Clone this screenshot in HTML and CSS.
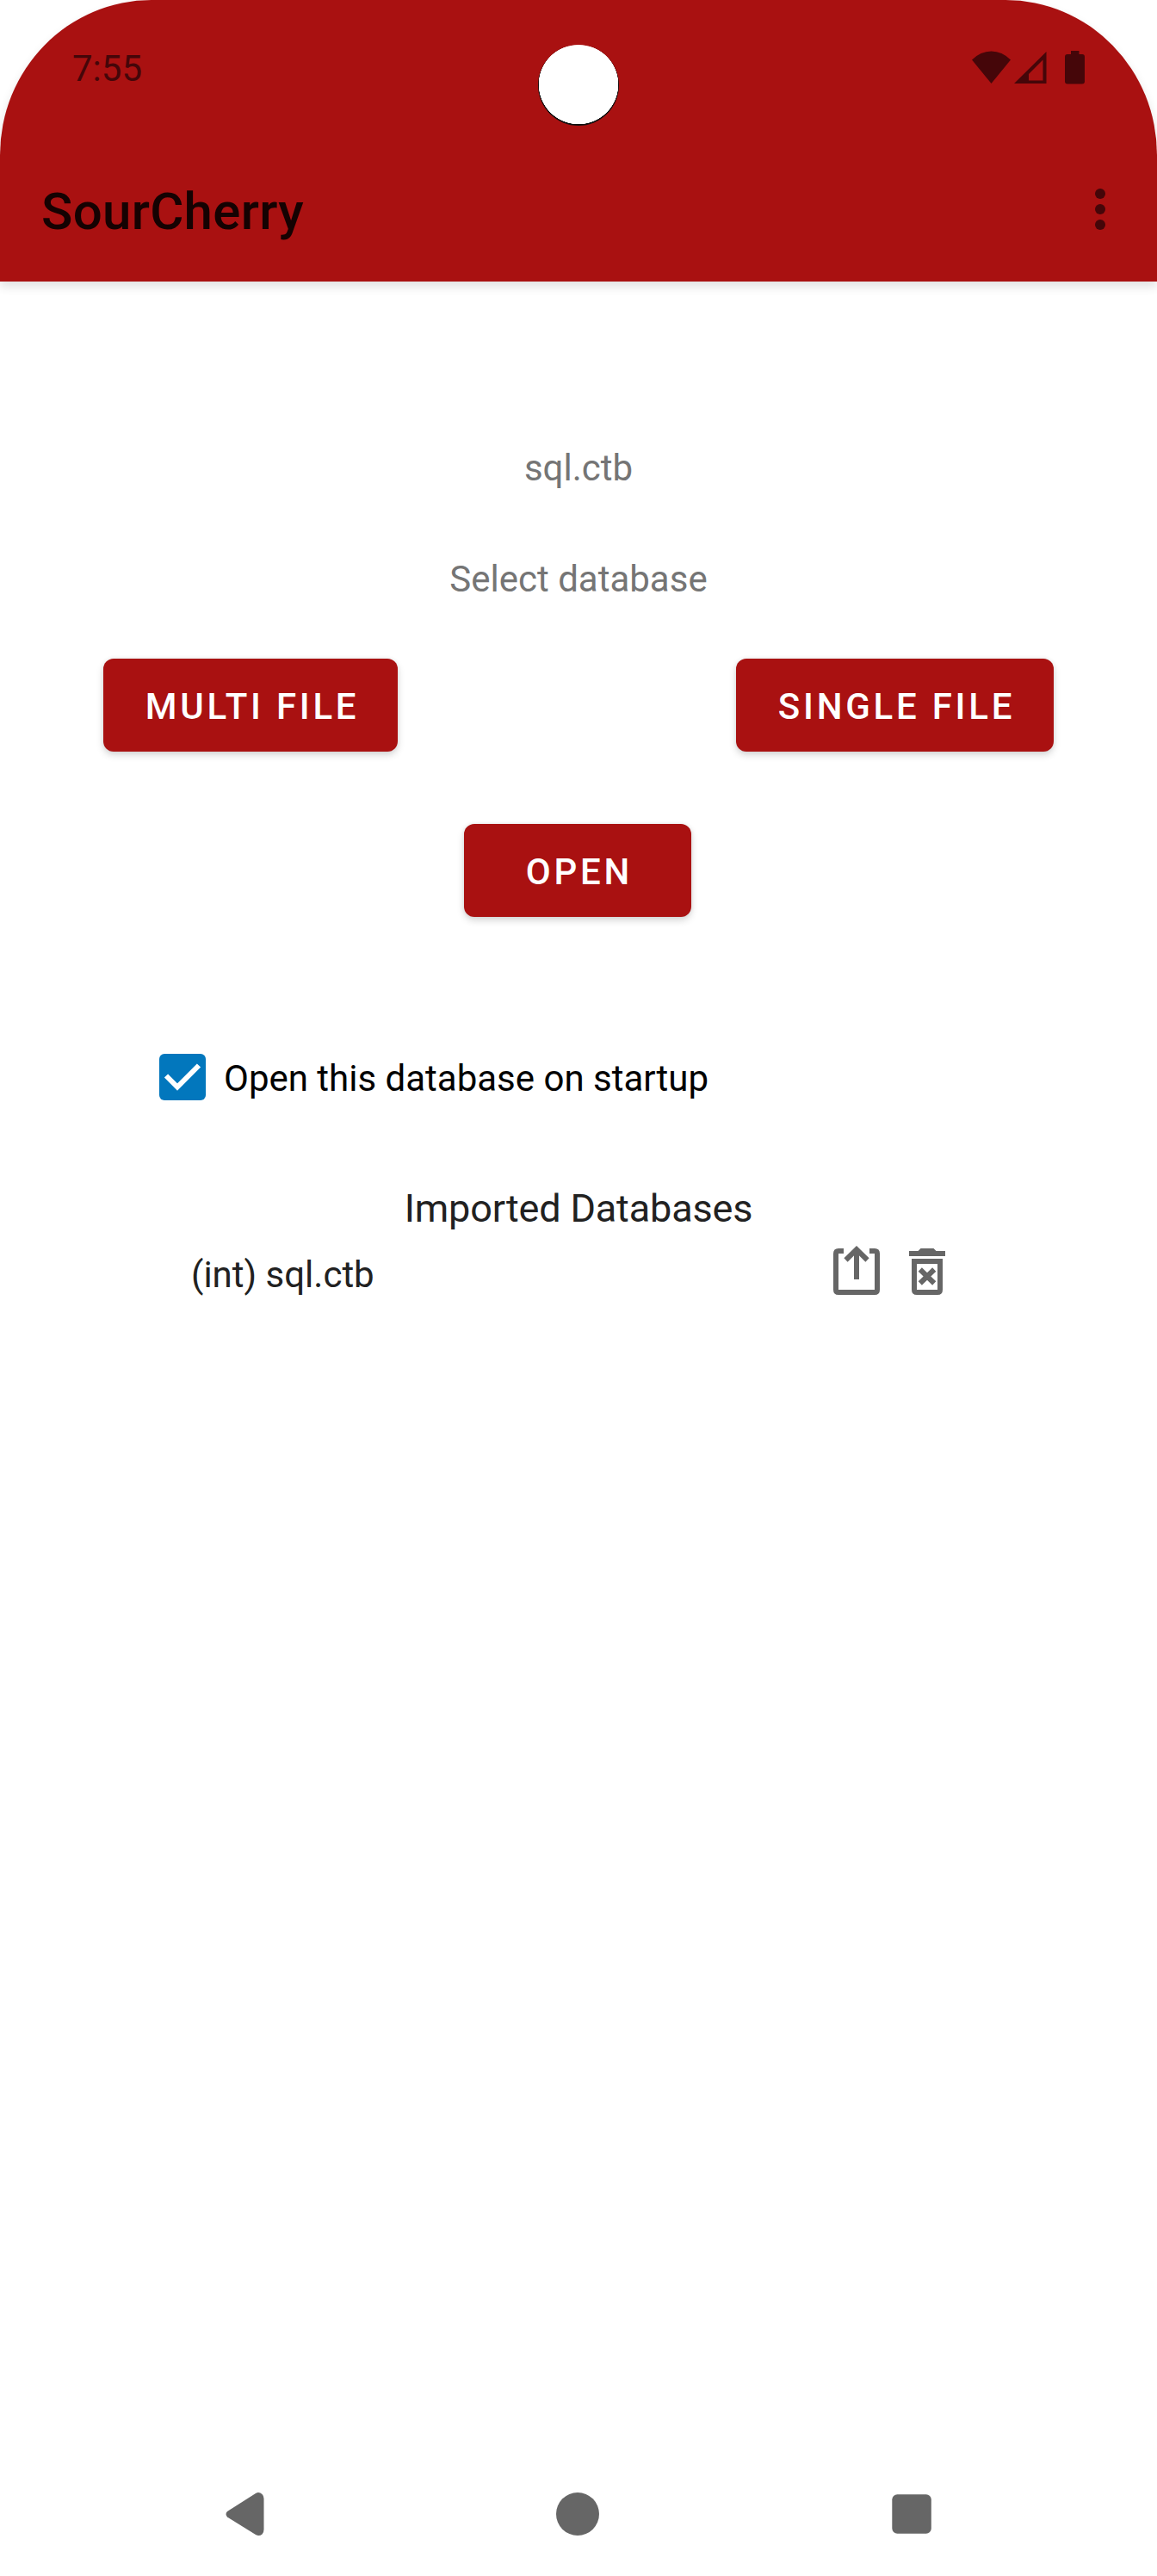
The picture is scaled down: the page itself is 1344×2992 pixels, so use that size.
FILE: index.html
```html
<!DOCTYPE html>
<html lang="en">
<head>
<meta charset="utf-8">
<title>SourCherry</title>
<link rel="stylesheet" href="styles.css">
</head>
<body>
<div class="screen">
  <header class="header">
    <div class="status-bar">
      <span class="clock">7:55</span>
      <svg class="status-icons" width="136" height="44" viewBox="1127 56 136 44">
        <path d="M1129 69.5Q1139 59.5 1151.500 59.500Q1164 59.500 1174 69.500L1151.500 97Z"/>
        <path fill-rule="evenodd" d="M1178 97L1215.500 60V97ZM1195 93.500H1211.500V69.500L1195 86Z"/>
        <path d="M1244 59H1253.500V63H1257Q1260 63 1260 66V94.500Q1260 97.500 1257 97.500H1240Q1237 97.500 1237 94.500V66Q1237 63 1240 63H1244Z"/>
      </svg>
    </div>
    <div class="camera"></div>
    <div class="app-bar">
      <h1 class="title">SourCherry</h1>
      <svg class="overflow" width="12" height="48" viewBox="0 0 12 48">
        <circle cx="6" cy="6" r="6"/><circle cx="6" cy="24" r="6"/><circle cx="6" cy="42" r="6"/>
      </svg>
    </div>
  </header>
  <main class="content">
    <p class="db-name">sql.ctb</p>
    <p class="hint">Select database</p>
    <div class="file-buttons">
      <button class="btn btn-multi">MULTI FILE</button>
      <button class="btn btn-single">SINGLE FILE</button>
    </div>
    <button class="btn btn-open">OPEN</button>
    <div class="startup">
      <svg class="checkbox" width="54" height="54" viewBox="0 0 54 54">
        <rect width="54" height="54" rx="6" fill="#0277bd"/>
        <path d="M8 25.500L21 38.500L46 13.500" fill="none" stroke="#fff" stroke-width="6"/>
      </svg>
      <span class="startup-label">Open this database on startup</span>
    </div>
    <h2 class="section-title">Imported Databases</h2>
    <div class="db-row">
      <span class="db-label">(int) sql.ctb</span>
      <svg class="export" width="54" height="57" viewBox="0 0 54 57" fill="none" stroke="#666" stroke-width="6">
        <path d="M12 6H6Q3 6 3 9V51Q3 54 6 54H48Q51 54 51 51V9Q51 6 48 6H42"/>
        <path d="M27 39V5M14.500 16.500L27 4.200L39.500 16.500"/>
      </svg>
      <svg class="delete" width="42" height="54" viewBox="0 0 42 54">
        <path fill="#666" d="M0 3H10.500L13.500 0H28.500L31.500 3H42V9H0Z"/>
        <path fill="none" stroke="#666" stroke-width="6" d="M6 15H36V48Q36 51 33 51H9Q6 51 6 48ZM12.800 24.500L29.200 40.500M29.200 24.500L12.800 40.500"/>
      </svg>
    </div>
  </main>
  <nav class="nav-bar">
    <svg width="60" height="60" viewBox="253 2890 60 60"><path d="M264 2917L297 2896Q301 2893.800 304.500 2897Q306.500 2899 306.500 2902V2938Q306.500 2941.500 304.500 2943.500Q301 2946.400 297 2944L264 2923.500Q261 2920 264 2917Z"/></svg>
    <svg width="60" height="60" viewBox="0 0 60 60"><circle cx="30" cy="30" r="25"/></svg>
    <svg width="60" height="60" viewBox="0 0 60 60"><rect x="7.300" y="7.200" width="45.500" height="45.500" rx="6"/></svg>
  </nav>
</div>
</body>
</html>
```
FILE: styles.css
```css
* {
  box-sizing: border-box;
}

body {
  margin: 0;
  background: #fff;
  font-family: Roboto, sans-serif;
  font-size: 42px;
  line-height: 50px;
}

h1, h2, p {
  margin: 0;
}

svg {
  display: block;
  flex: none;
}

.screen {
  width: 1344px;
  height: 2992px;
  display: flex;
  flex-direction: column;
}

.header {
  position: relative;
  height: 327px;
  flex: none;
  background: #a91111;
  border-radius: 176px 176px 0 0 / 180px 180px 0 0;
  box-shadow: 0 6px 12px rgba(0, 0, 0, 0.12);
}

.status-bar {
  display: flex;
  justify-content: space-between;
  height: 159px;
  padding: 54px 81px 0 84px;
  color: #450609;
}

.clock {
  padding-top: 1px;
}

.status-icons {
  margin-top: 2px;
  fill: #450609;
}

.camera {
  position: absolute;
  left: 625px;
  top: 52px;
  width: 94px;
  height: 94px;
  border-radius: 50%;
  background: radial-gradient(circle at 47px 46px, #fff 46px, #111 46.5px);
}

.app-bar {
  display: flex;
  justify-content: space-between;
  align-items: center;
  height: 168px;
  padding: 0 60px 0 48px;
}

.title {
  font-size: 60px;
  line-height: 72px;
  font-weight: 500;
  letter-spacing: 0.3px;
  color: #150202;
  padding-top: 6px;
}

.overflow {
  fill: #450609;
}

.content {
  flex: 1;
  display: flex;
  flex-direction: column;
  align-items: center;
}

.db-name {
  margin-top: 192px;
  color: #757575;
}

.hint {
  margin-top: 79px;
  color: #757575;
}

.file-buttons {
  display: flex;
  justify-content: space-between;
  align-self: stretch;
  margin-top: 67px;
  padding: 0 120px;
}

.btn {
  height: 108px;
  border: 0;
  border-radius: 12px;
  padding: 4px 0 0 4px;
  background: #a91111;
  color: #fff;
  font: 500 42px/50px Roboto, sans-serif;
  letter-spacing: 3.75px;
  box-shadow: 0 4px 8px rgba(0, 0, 0, 0.16), 0 0 5px rgba(0, 0, 0, 0.07);
}

.btn-multi {
  width: 342px;
}

.btn-single {
  width: 369px;
}

.btn-open {
  width: 264px;
  margin-top: 84px;
  margin-right: 2px;
}

.startup {
  display: flex;
  align-items: center;
  align-self: stretch;
  gap: 21px;
  margin-top: 159px;
  padding-left: 185px;
  color: #000;
}

.startup-label {
  padding-top: 4px;
}

.section-title {
  margin-top: 99px;
  font-size: 45px;
  font-weight: 400;
  line-height: 54px;
  letter-spacing: -0.15px;
  color: #212121;
}

.db-row {
  display: flex;
  align-self: stretch;
  margin-top: 16px;
  padding-left: 222px;
  color: #212121;
}

.db-label {
  width: 746px;
  padding-top: 9px;
}

.delete {
  margin: 3px 0 0 34px;
}

.nav-bar {
  flex: none;
  display: flex;
  justify-content: space-between;
  height: 102px;
  padding: 0 255px 0 253px;
  fill: #666;
}
```
